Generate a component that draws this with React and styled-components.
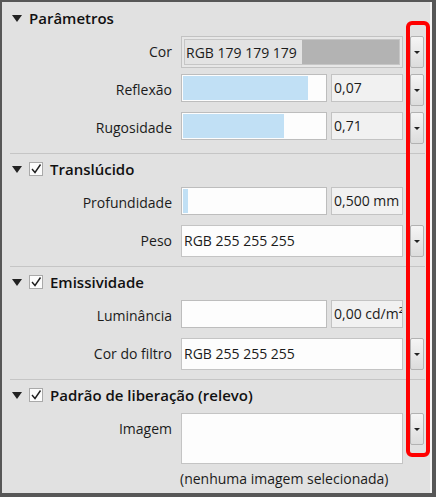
import styled, { createGlobalStyle } from 'styled-components';

const GlobalStyle = createGlobalStyle`
	html, body {
		margin: 0;
		padding: 0;
		background: #575757;
	}
	* {
		box-sizing: border-box;
	}
`;

const Frame = styled.div`
	position: relative;
	width: 436px;
	height: 497px;
	padding: 2px 4px 4px 2px;
	background-color: #575757;
	font-family: 'Open Sans', 'Noto Sans', sans-serif;
	color: #1b1b1b;
`;

const Panel = styled.div`
	height: 100%;
	padding-top: 1px;
	background-color: #e1e1e1;
	border-right: 2px solid #f3f3f3;
`;

const Section = styled.div`
	padding: 5px 0 9px;
`;

const Divider = styled.div`
	height: 1px;
	margin: 0 5px 0 8px;
	background-color: #c5c5c5;
`;

const Header = styled.div`
	display: flex;
	align-items: center;
	height: 20px;
	padding-left: 10px;
	margin-bottom: 8px;
`;

const Title = styled.span`
	font-size: 15px;
	font-weight: 600;
	color: #111;
	white-space: nowrap;
`;

const CheckBox = styled.span`
	display: flex;
	align-items: center;
	justify-content: center;
	width: 14px;
	height: 14px;
	margin-right: 7px;
	background-color: #fcfcfc;
	border: 1px solid #a9a9a9;
`;

const Rows = styled.div`
	display: flex;
	flex-direction: column;
	gap: 6px;
`;

const Row = styled.div`
	display: grid;
	grid-template-columns: 170px 222px 14px;
	column-gap: 9px;
	align-items: start;

	& > :nth-child(3) {
		margin-left: -2px;
	}
`;

const Label = styled.div`
	font-size: 14px;
	line-height: 32px;
	text-align: right;
	white-space: nowrap;
`;

const ColorField = styled.div`
	height: 32px;
	padding: 2px;
	background-color: #e7e7e7;
	border: 1px solid #c2c2c2;
`;

const ColorInner = styled.div`
	display: flex;
	height: 100%;
	background-color: #e3e3e3;
	border: 1px solid #c6c6c6;
`;

const FieldText = styled.span`
	padding-left: ${(p) => p.$pad || 1}px;
	font-size: 14px;
	line-height: ${(p) => p.$lh || 26}px;
	white-space: nowrap;
	overflow: hidden;
`;

const Swatch = styled.div`
	width: 97px;
	margin-left: auto;
	background-color: ${(p) => p.$color};
`;

const Pair = styled.div`
	display: flex;
	gap: 4px;
	height: 28px;
`;

const Slider = styled.div`
	width: 146px;
	padding: 1px;
	background-color: #fdfdfd;
	border: 1px solid #bdbdbd;
`;

const SliderFill = styled.div`
	height: 100%;
	background-color: #c1e0f5;
`;

const ValueBox = styled.div`
	display: flex;
	flex: 1;
	background-color: #f1f1f1;
	border: 1px solid #c3c3c3;
	overflow: hidden;
`;

const TextField = styled.div`
	display: flex;
	height: ${(p) => p.$h || 32}px;
	background-color: #fdfdfd;
	border: 1px solid #c4c4c4;
`;

const DropButton = styled.div`
	display: flex;
	align-items: center;
	justify-content: center;
	width: 14px;
	height: 32px;
	background: linear-gradient(#f5f5f5, #dcdcdc);
	border: 1px solid #b2b2b2;
	border-radius: 2px;
`;

const Caption = styled.div`
	grid-column: 2 / 4;
	margin: 5px 0 0 -1px;
	font-size: 14px;
	line-height: 20px;
	white-space: nowrap;
`;

const Highlight = styled.div`
	position: absolute;
	left: 406px;
	top: 21px;
	width: 24px;
	height: 436px;
	border: 4px solid #ff0000;
	border-radius: 6px;
	pointer-events: none;
`;

function Caret() {
	return (
		<svg width="10" height="7" viewBox="0 0 10 7" style={{ marginRight: 7 }}>
			<polygon points="0,0 10,0 5,7" fill="#222" />
		</svg>
	);
}

function Check() {
	return (
		<svg width="12" height="12" viewBox="0 0 12 12">
			<polyline points="2,6 5,9.5 10.5,1.5" fill="none" stroke="#1e1e1e" strokeWidth="1.4" />
		</svg>
	);
}

function Arrow() {
	return (
		<svg width="6" height="3" viewBox="0 0 6 3">
			<polygon points="0,0 6,0 3,3" fill="#222" />
		</svg>
	);
}

function SectionHeader({ title, checked }) {
	return (
		<Header>
			<Caret />
			{checked && (
				<CheckBox>
					<Check />
				</CheckBox>
			)}
			<Title>{title}</Title>
		</Header>
	);
}

function SliderRow({ label, fill, value, dropdown }) {
	return (
		<Row>
			<Label>{label}</Label>
			<Pair>
				<Slider>
					<SliderFill style={{ width: fill }} />
				</Slider>
				<ValueBox>
					<FieldText $pad={2}>{value}</FieldText>
				</ValueBox>
			</Pair>
			{dropdown && (
				<DropButton>
					<Arrow />
				</DropButton>
			)}
		</Row>
	);
}

function RgbRow({ label, value }) {
	return (
		<Row>
			<Label>{label}</Label>
			<TextField>
				<FieldText $pad={2} $lh={30}>{value}</FieldText>
			</TextField>
			<DropButton>
				<Arrow />
			</DropButton>
		</Row>
	);
}

export default function App() {
	return (
		<Frame>
			<GlobalStyle />
			<Panel>
				<Section>
					<SectionHeader title="Parâmetros" />
					<Rows>
						<Row>
							<Label>Cor</Label>
							<ColorField>
								<ColorInner>
									<FieldText>RGB 179 179 179</FieldText>
									<Swatch $color="#b3b3b3" />
								</ColorInner>
							</ColorField>
							<DropButton>
								<Arrow />
							</DropButton>
						</Row>
						<SliderRow label="Reflexão" fill="125px" value="0,07" dropdown />
						<SliderRow label="Rugosidade" fill="101px" value="0,71" dropdown />
					</Rows>
				</Section>
				<Divider />
				<Section>
					<SectionHeader title="Translúcido" checked />
					<Rows>
						<SliderRow label="Profundidade" fill="5px" value="0,500 mm" />
						<RgbRow label="Peso" value="RGB 255 255 255" />
					</Rows>
				</Section>
				<Divider />
				<Section>
					<SectionHeader title="Emissividade" checked />
					<Rows>
						<SliderRow label="Luminância" fill="0px" value="0,00 cd/m²" />
						<RgbRow label="Cor do filtro" value="RGB 255 255 255" />
					</Rows>
				</Section>
				<Divider />
				<Section>
					<SectionHeader title="Padrão de liberação (relevo)" checked />
					<Row>
						<Label>Imagem</Label>
						<TextField $h={51} />
						<DropButton>
							<Arrow />
						</DropButton>
						<Caption>(nenhuma imagem selecionada)</Caption>
					</Row>
				</Section>
			</Panel>
			<Highlight />
		</Frame>
	);
}
